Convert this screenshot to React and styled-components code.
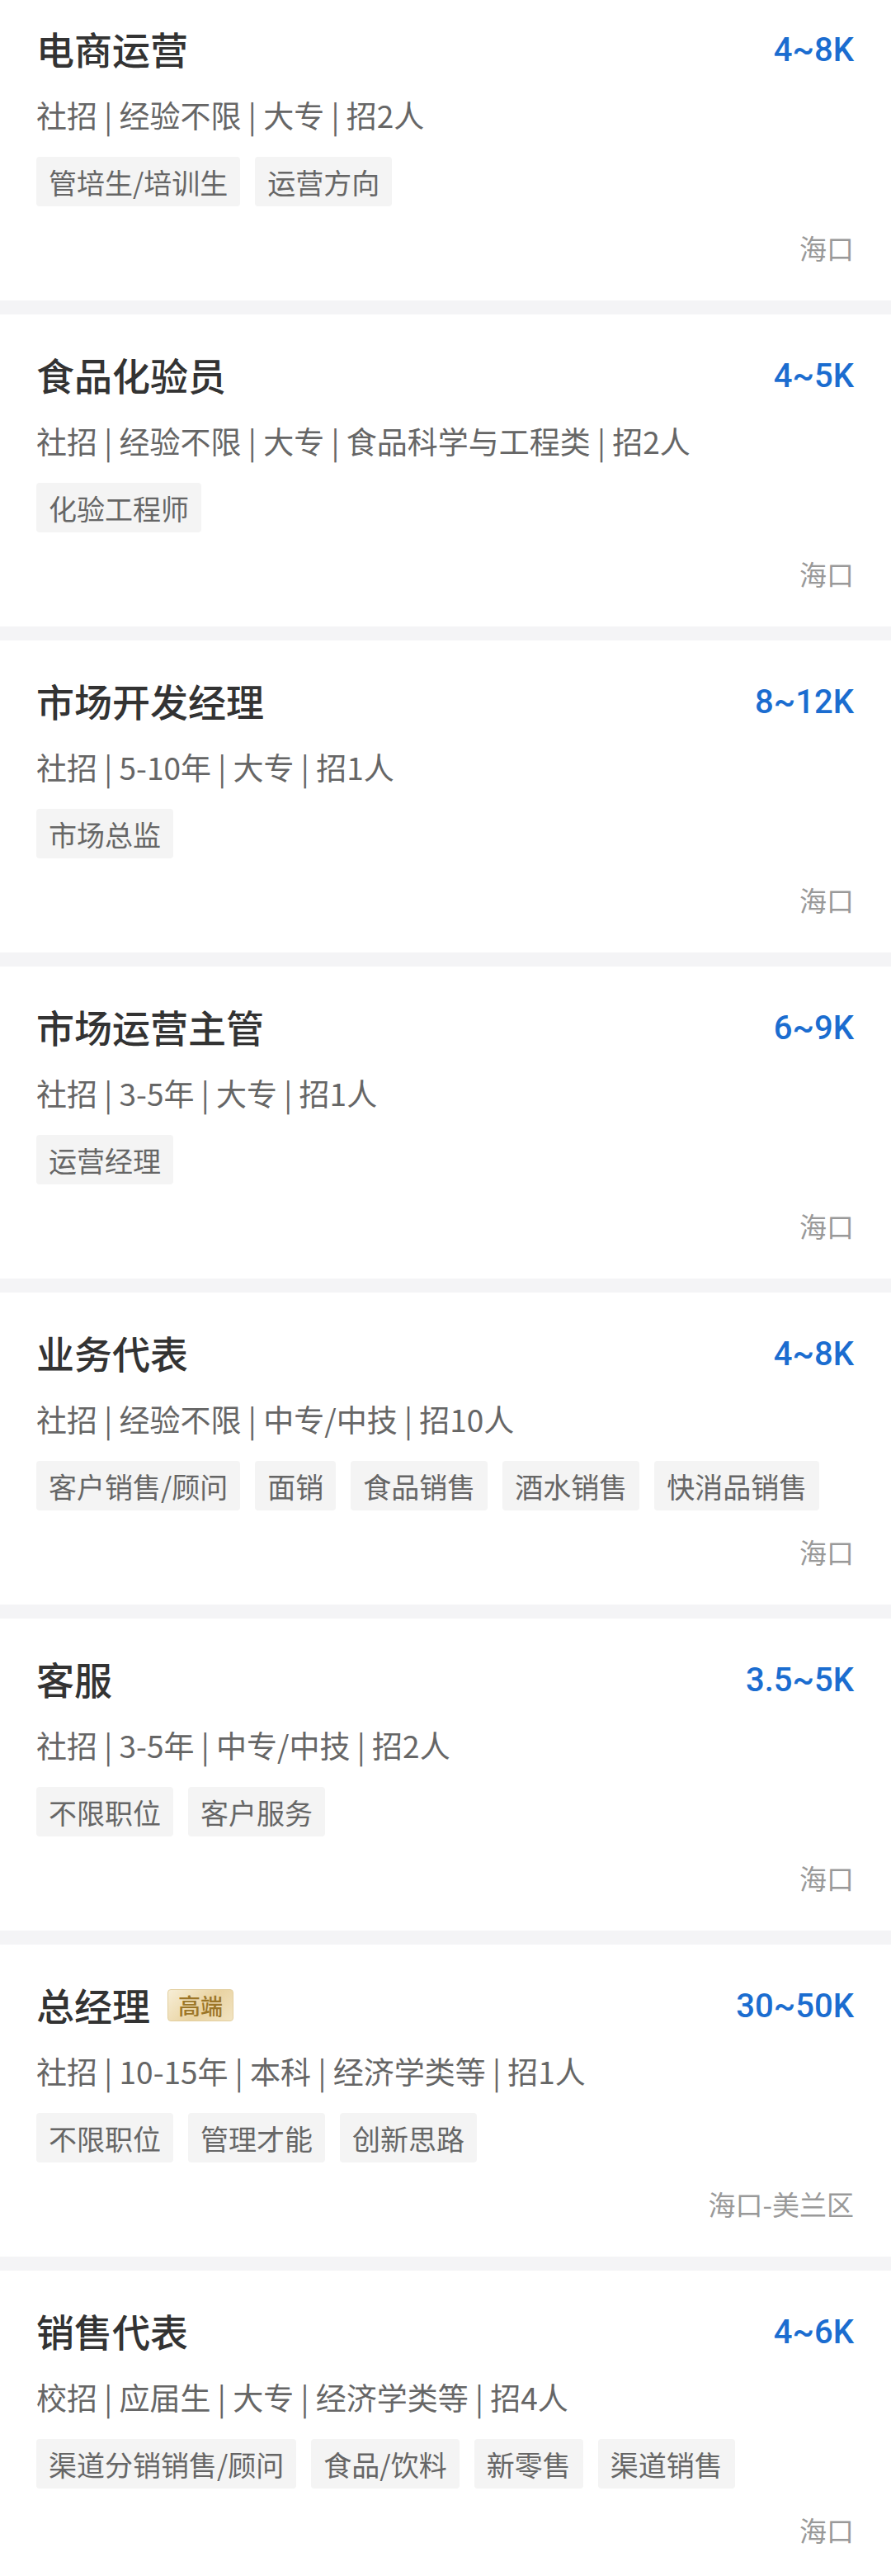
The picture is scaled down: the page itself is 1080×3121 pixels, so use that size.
import styled, { createGlobalStyle } from "styled-components";

const jobs = [
  {
    title: "电商运营",
    salary: "4~8K",
    meta: ["社招", "经验不限", "大专", "招2人"],
    tags: ["管培生/培训生", "运营方向"],
    place: "海口",
  },
  {
    title: "食品化验员",
    salary: "4~5K",
    meta: ["社招", "经验不限", "大专", "食品科学与工程类", "招2人"],
    tags: ["化验工程师"],
    place: "海口",
  },
  {
    title: "市场开发经理",
    salary: "8~12K",
    meta: ["社招", "5-10年", "大专", "招1人"],
    tags: ["市场总监"],
    place: "海口",
  },
  {
    title: "市场运营主管",
    salary: "6~9K",
    meta: ["社招", "3-5年", "大专", "招1人"],
    tags: ["运营经理"],
    place: "海口",
  },
  {
    title: "业务代表",
    salary: "4~8K",
    meta: ["社招", "经验不限", "中专/中技", "招10人"],
    tags: ["客户销售/顾问", "面销", "食品销售", "酒水销售", "快消品销售"],
    place: "海口",
  },
  {
    title: "客服",
    salary: "3.5~5K",
    meta: ["社招", "3-5年", "中专/中技", "招2人"],
    tags: ["不限职位", "客户服务"],
    place: "海口",
  },
  {
    title: "总经理",
    premium: true,
    salary: "30~50K",
    meta: ["社招", "10-15年", "本科", "经济学类等", "招1人"],
    tags: ["不限职位", "管理才能", "创新思路"],
    place: "海口-美兰区",
  },
  {
    title: "销售代表",
    salary: "4~6K",
    meta: ["校招", "应届生", "大专", "经济学类等", "招4人"],
    tags: ["渠道分销销售/顾问", "食品/饮料", "新零售", "渠道销售"],
    place: "海口",
  },
];

function JobCard({ job }) {
  return (
    <Card>
      <TopRow>
        <TitleWrap>
          <Title>{job.title}</Title>
          {job.premium && <Badge>高端</Badge>}
        </TitleWrap>
        <Salary>{job.salary}</Salary>
      </TopRow>
      <Meta>{job.meta.join(" | ")}</Meta>
      <Tags>
        {job.tags.map((t) => (
          <Tag key={t}>{t}</Tag>
        ))}
      </Tags>
      <Place>{job.place}</Place>
    </Card>
  );
}

export default function App() {
  return (
    <>
      <GlobalStyle />
      <List>
        {jobs.map((job) => (
          <JobCard key={job.title} job={job} />
        ))}
      </List>
    </>
  );
}

const GlobalStyle = createGlobalStyle`
  body {
    margin: 0;
    background: #ffffff;
    font-family: "Noto Sans CJK SC", "Noto Sans", sans-serif;
    overflow: hidden;
  }
  * {
    box-sizing: border-box;
  }
`;

const List = styled.div`
  display: flex;
  flex-direction: column;
  gap: 17px;
  margin-top: -14px;
  background: #f4f4f6;
`;

const Card = styled.div`
  display: flex;
  flex-direction: column;
  height: 378px;
  padding: 40px 45px 41px 44px;
  background: #ffffff;
`;

const TopRow = styled.div`
  display: flex;
  align-items: center;
  justify-content: space-between;
  height: 64px;
`;

const TitleWrap = styled.div`
  display: flex;
  align-items: center;
  gap: 21px;
`;

const Title = styled.div`
  font-size: 46px;
  line-height: 64px;
  font-weight: 500;
  color: #333333;
`;

const Badge = styled.span`
  display: flex;
  align-items: center;
  justify-content: center;
  width: 80px;
  height: 39px;
  margin-top: 2px;
  border-radius: 4px;
  border: 1px solid #e3cf9f;
  background: linear-gradient(135deg, #f7eed6 0%, #e9d3a2 55%, #f2e4c2 100%);
  color: #9c7628;
  font-size: 27px;
  font-weight: 500;
`;

const Salary = styled.div`
  font-family: "Roboto", "Liberation Sans", sans-serif;
  font-size: 40px;
  font-weight: 500;
  line-height: 64px;
  margin-top: 6px;
  color: #1b6dd0;
`;

const Meta = styled.div`
  margin-top: 24px;
  font-size: 37px;
  line-height: 50px;
  color: #666666;
  white-space: nowrap;
`;

const Tags = styled.div`
  display: flex;
  gap: 18px;
  margin-top: 26px;
`;

const Tag = styled.span`
  display: flex;
  align-items: center;
  height: 60px;
  padding: 0 15px;
  border-radius: 4px;
  background: #f4f4f4;
  color: #666666;
  font-size: 34px;
`;

const Place = styled.div`
  align-self: flex-end;
  margin-top: 27px;
  font-size: 33px;
  line-height: 46px;
  color: #999999;
`;
